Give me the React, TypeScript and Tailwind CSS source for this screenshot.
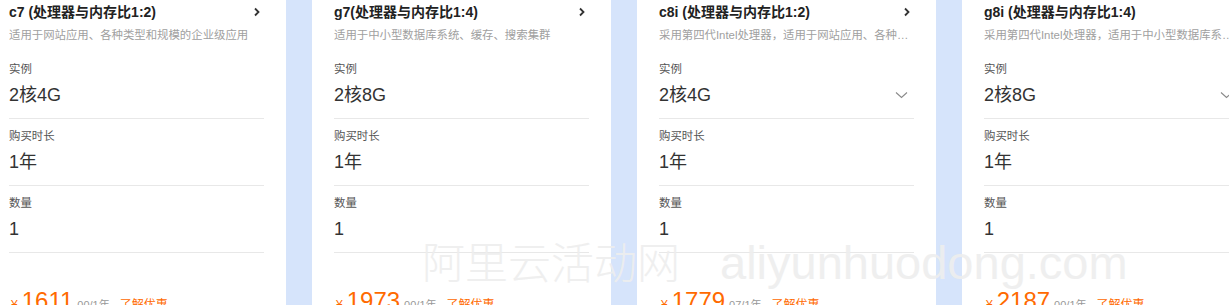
import React from "react";

type Plan = {
  title: string;
  desc: string;
  spec: string;
  price: string;
  cents: string;
  select?: boolean;
};

const plans: Plan[] = [
  {
    title: "c7 (处理器与内存比1:2)",
    desc: "适用于网站应用、各种类型和规模的企业级应用",
    spec: "2核4G",
    price: "1611",
    cents: ".00",
  },
  {
    title: "g7(处理器与内存比1:4)",
    desc: "适用于中小型数据库系统、缓存、搜索集群",
    spec: "2核8G",
    price: "1973",
    cents: ".00",
  },
  {
    title: "c8i (处理器与内存比1:2)",
    desc: "采用第四代Intel处理器，适用于网站应用、各种类型和规模的企业级应用",
    spec: "2核4G",
    price: "1779",
    cents: ".07",
    select: true,
  },
  {
    title: "g8i (处理器与内存比1:4)",
    desc: "采用第四代Intel处理器，适用于中小型数据库系统、缓存、搜索集群",
    spec: "2核8G",
    price: "2187",
    cents: ".00",
    select: true,
  },
];

const ChevronRight = () => (
  <svg width="8" height="10" viewBox="0 0 8 10" className="mr-[3px]">
    <polyline points="2,1.5 5.5,5 2,8.5" fill="none" stroke="#333" strokeWidth="1.8" />
  </svg>
);

const ChevronDown = () => (
  <svg width="13" height="8" viewBox="0 0 13 8" className="mr-[6px]">
    <polyline points="1,1.5 6.5,6.5 12,1.5" fill="none" stroke="#8a8a8a" strokeWidth="1.1" />
  </svg>
);

const Field = ({ label, value, select }: { label: string; value: string; select?: boolean }) => (
  <div className="border-b border-[#e8e8e8] pt-[9px] pb-[10px]">
    <div className="text-[11.4px] leading-[16px] text-[#555]">{label}</div>
    <div className="mt-[5px] flex h-[26px] items-center justify-between">
      <span className="text-[18px] leading-[26px] text-[#333]">{value}</span>
      {select && <ChevronDown />}
    </div>
  </div>
);

const Card = ({ plan }: { plan: Plan }) => (
  <div className="w-[299px] shrink-0 bg-white px-[22px] pt-[2px]">
    <div className="flex h-[20px] items-center justify-between">
      <span className="text-[14px] leading-[20px] font-bold text-[#222]">{plan.title}</span>
      <ChevronRight />
    </div>
    <div className="mt-[4px] truncate text-[11.4px] leading-[18px] text-[#a0a0a0]">{plan.desc}</div>
    <div className="mt-[8px]">
      <Field label="实例" value={plan.spec} select={plan.select} />
      <Field label="购买时长" value="1年" />
      <Field label="数量" value="1" />
    </div>
    <div className="mt-[32px] flex items-baseline pl-[2px] text-[#ff6a00]">
      <span className="text-[12px]">¥</span>
      <span className="ml-[4px] text-[24px] leading-[32px]">{plan.price}</span>
      <span className="ml-[4px] text-[11px] text-[#999]">{plan.cents.slice(1)}/1年</span>
      <span className="ml-[10px] text-[12px]">了解优惠</span>
    </div>
  </div>
);

export default function App() {
  return (
    <div className="relative h-[305px] w-[1229px] overflow-hidden bg-[#d6e4fb] font-['Liberation_Sans','Noto_Sans_CJK_SC',sans-serif]">
      <div className="ml-[-13px] flex gap-[26px]">
        {plans.map((p) => (
          <Card key={p.title} plan={p} />
        ))}
      </div>
      {/* watermark */}
      <div className="pointer-events-none absolute top-[234px] left-[422px] flex items-baseline leading-[58px] font-light whitespace-nowrap text-[#eeeeee] opacity-90">
        <span className="text-[43px]">阿里云活动网</span>
        <span className="ml-[40px] text-[47px]">aliyunhuodong.com</span>
      </div>
    </div>
  );
}
